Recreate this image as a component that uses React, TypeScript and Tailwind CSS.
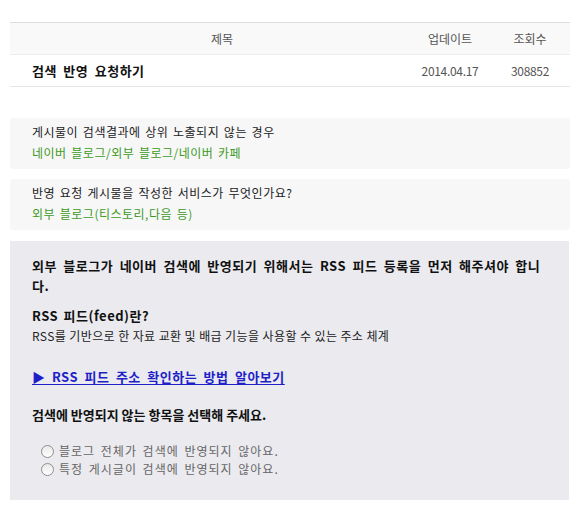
const font = { fontFamily: '"Noto Sans CJK KR", "Noto Sans", sans-serif' }

const infoBoxes = [
  { question: '게시물이 검색결과에 상위 노출되지 않는 경우', answer: '네이버 블로그/외부 블로그/네이버 카페' },
  { question: '반영 요청 게시물을 작성한 서비스가 무엇인가요?', answer: '외부 블로그(티스토리,다음 등)' },
]

const options = ['블로그 전체가 검색에 반영되지 않아요.', '특정 게시글이 검색에 반영되지 않아요.']

function Radio() {
  return (
    <span className="inline-block w-[13px] h-[13px] rounded-full border border-[#8f8f8f] bg-gradient-to-b from-[#e8e8e8] to-white shrink-0" />
  )
}

export default function App() {
  return (
    <div className="bg-white min-h-[515px] pt-[22px] pl-[10px]" style={font}>
      <div className="w-[560px]">
        <div className="border-t border-[#dcdcdc]">
          <div className="grid grid-cols-[1fr_80px_80px] h-[32px] items-center bg-[#f9f9f9] border-b border-[#ececec] text-[12px] text-[#555]">
            <div className="text-center pl-[24px]">제목</div>
            <div className="text-center">업데이트</div>
            <div className="text-center">조회수</div>
          </div>
          <div className="grid grid-cols-[1fr_80px_80px] h-[32px] items-center border-b border-[#e6e6e6]">
            <div className="pl-[22px] text-[13px] font-bold text-[#111] tracking-[0.5px] [word-spacing:3px]">검색 반영 요청하기</div>
            <div className="text-center text-[12px] text-[#555] tracking-[-0.3px]">2014.04.17</div>
            <div className="text-center text-[12px] text-[#555] tracking-[-0.3px]">308852</div>
          </div>
        </div>

        <div className="mt-[31px] flex flex-col gap-[10px]">
          {infoBoxes.map((box) => (
            <div key={box.question} className="rounded-[3px] bg-[#f7f7f8] pl-[22px] pt-[3px] pb-[6px] text-[12px] leading-[21px] tracking-[0.5px] [word-spacing:1.5px]">
              <div className="text-[#222]">{box.question}</div>
              <div className="text-[#3d9a1f]">{box.answer}</div>
            </div>
          ))}
        </div>

        <div className="mt-[11px] w-[559px] bg-[#eaeaef] pl-[22px] pr-[18px] pt-[15px] pb-[22px] text-[13px] leading-[20px] text-[#111]">
          <p className="font-bold tracking-[0.5px] [word-spacing:3px]">
            외부 블로그가 네이버 검색에 반영되기 위해서는 RSS 피드 등록을 먼저 해주셔야 합니
            <br />
            다.
          </p>
          <p className="mt-[10px] font-bold tracking-[0.5px] [word-spacing:2px]">RSS 피드(feed)란?</p>
          <p className="text-[12px] text-[#222] tracking-[0.4px]">RSS를 기반으로 한 자료 교환 및 배급 기능을 사용할 수 있는 주소 체계</p>
          <a href="#" className="block mt-[21px] font-bold text-[#1f1fc8] underline underline-offset-2 tracking-[0.5px] [word-spacing:3px]">
            ▶ RSS 피드 주소 확인하는 방법 알아보기
          </a>
          <p className="mt-[18px] font-bold">검색에 반영되지 않는 항목을 선택해 주세요.</p>
          <div className="mt-[17px] flex flex-col">
            {options.map((opt) => (
              <label key={opt} className="flex items-center h-[18px] pl-[9px] gap-[5px] text-[12px] text-[#666] tracking-[1px] [word-spacing:2px]">
                <Radio />
                <span>{opt}</span>
              </label>
            ))}
          </div>
        </div>
      </div>
    </div>
  )
}
